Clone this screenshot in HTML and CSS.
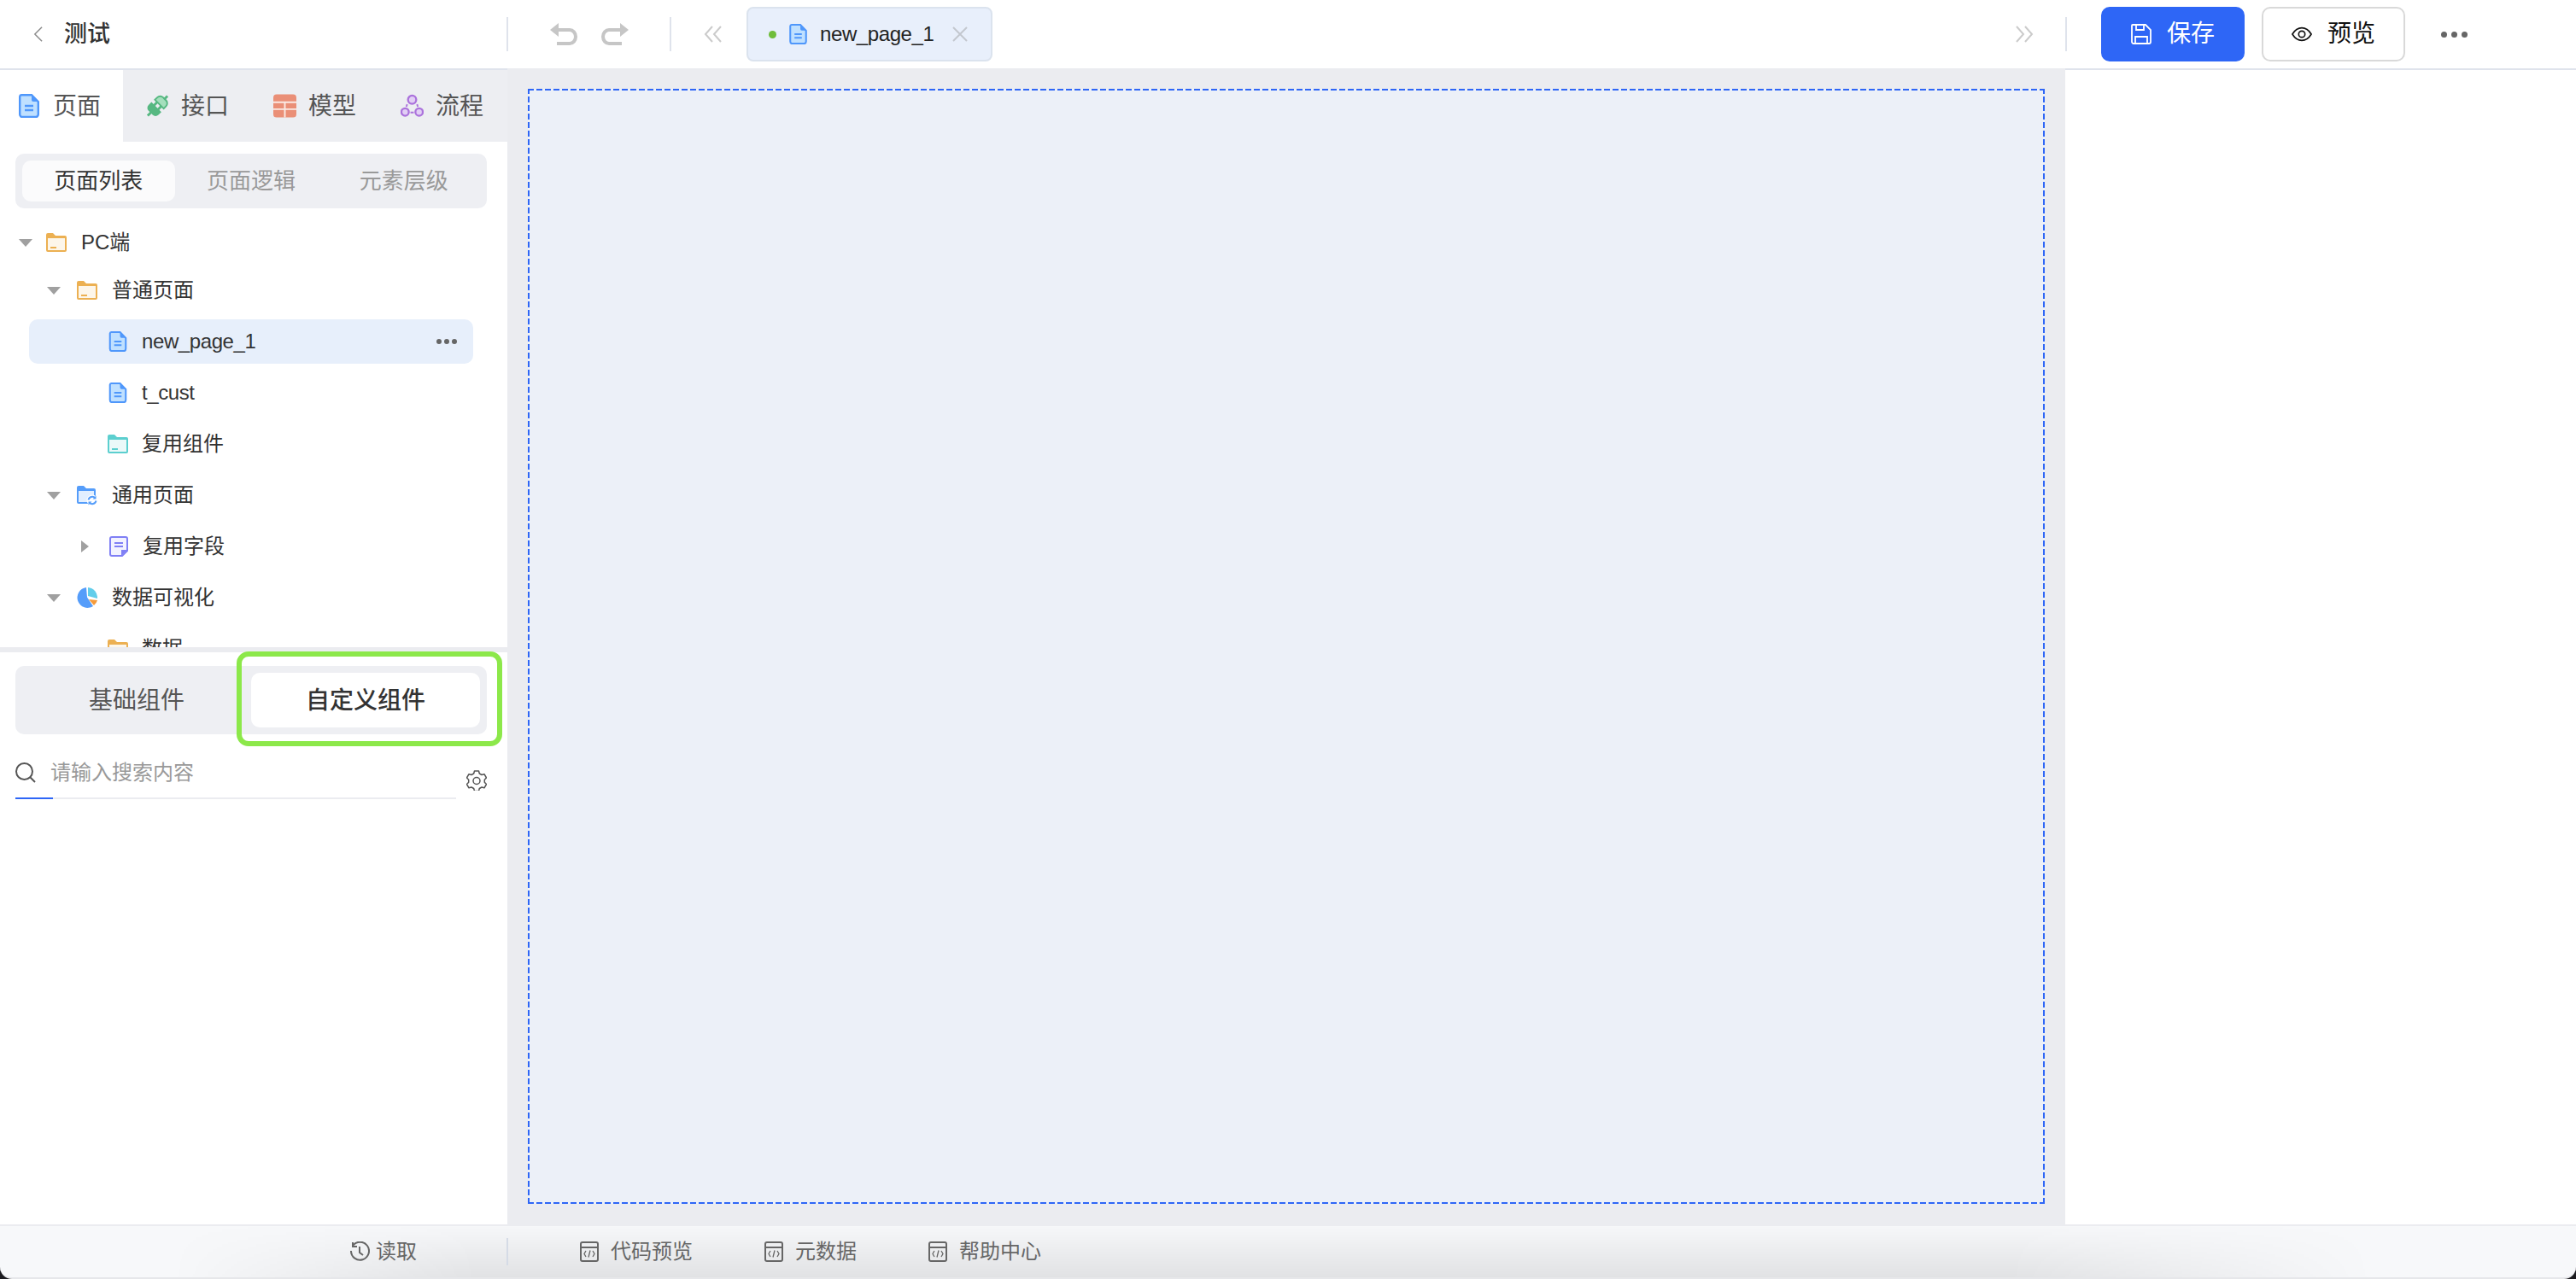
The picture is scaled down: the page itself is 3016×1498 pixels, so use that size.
FILE: index.html

```html
<!DOCTYPE html>
<html>
<head>
    <meta charset="UTF-8">
    <title>测试</title>
    <link rel="stylesheet" href="styles.css">
</head>
<body>
    <svg class="defs">
        <symbol id="i-page" viewBox="0 0 24 28">
            <path d="M3 1.200h12l7.800 8V24a3 3 0 0 1-3 3H4.200a3 3 0 0 1-3-3V3a2 2 0 0 1 1.800-1.800z" fill="#bfe0ff" stroke="#4f97fb" stroke-width="2.400"/>
            <path d="M15 1l8 8h-6a2 2 0 0 1-2-2z" fill="#4f97fb"/>
            <path d="M7 14h10M7 19h10" stroke="#4f97fb" stroke-width="2.400"/>
        </symbol>
        <symbol id="i-folder" viewBox="0 0 24 22">
            <path d="M0 2a2 2 0 0 1 2-2h6l3 3h11a2 2 0 0 1 2 2v15a2 2 0 0 1-2 2H2a2 2 0 0 1-2-2z" fill="currentColor"/>
            <rect x="2" y="6" width="20" height="14" fill="#fff" fill-opacity=".88"/>
            <rect x="5" y="16" width="7" height="2" fill="currentColor"/>
        </symbol>
        <symbol id="i-code" viewBox="0 0 24 24">
            <rect x="2" y="1" width="20" height="22" rx="2" fill="none" stroke="#666" stroke-width="2"/>
            <path d="M2 7h20" stroke="#666" stroke-width="2"/>
            <path d="M8 11l-2 3.500 2 3.500M16 11l2 3.500-2 3.500M13 10.500l-2 8" fill="none" stroke="#666" stroke-width="1.300"/>
        </symbol>
    </svg>

    <header class="topbar">
        <div class="topbar-title">
            <svg class="back" viewBox="0 0 12 20"><path d="M11 1L2 10l9 9" fill="none" stroke="#8c8c8c" stroke-width="1.600"/></svg>
            <span>测试</span>
        </div>
        <div class="topbar-history">
            <svg class="hist" viewBox="0 0 32 26"><path d="M8 8h15a7 8 0 0 1 0 16H8" fill="none" stroke="#c6c6c6" stroke-width="4"/><path d="M0 8l10-8v16z" fill="#c6c6c6"/></svg>
            <svg class="hist" viewBox="0 0 32 26"><path d="M24 8H9a7 8 0 0 0 0 16h15" fill="none" stroke="#c6c6c6" stroke-width="4"/><path d="M32 8L22 0v16z" fill="#c6c6c6"/></svg>
        </div>
        <div class="topbar-tabs">
            <svg class="scroll" viewBox="0 0 22 20"><path d="M10 1l-8 9 8 9M20 1l-8 9 8 9" fill="none" stroke="#cbcbcb" stroke-width="2"/></svg>
            <div class="open-tab">
                <i class="dot"></i>
                <svg class="ic-page"><use href="#i-page"/></svg>
                <span class="latin">new_page_1</span>
                <svg class="close" viewBox="0 0 18 18"><path d="M1 1l16 16M17 1L1 17" stroke="#c3c7ce" stroke-width="2"/></svg>
            </div>
            <svg class="scroll scroll-end" viewBox="0 0 22 20"><path d="M2 1l8 9-8 9M12 1l8 9-8 9" fill="none" stroke="#cbcbcb" stroke-width="2"/></svg>
        </div>
        <div class="topbar-actions">
            <button class="btn btn-primary">
                <svg class="btn-ic" viewBox="0 0 24 24"><path d="M2 1h15l6 6v14a2 2 0 0 1-2 2H3a2 2 0 0 1-2-2V2a1 1 0 0 1 1-1zM6 1v6h9V1M5 23v-8h14v8" fill="none" stroke="#fff" stroke-width="1.800"/></svg>
                <span>保存</span>
            </button>
            <button class="btn">
                <svg class="btn-ic" viewBox="0 0 26 18"><path d="M1 9c3-5 7-8 12-8s9 3 12 8c-3 5-7 8-12 8S4 14 1 9z" fill="none" stroke="#111" stroke-width="1.800"/><circle cx="13" cy="9" r="4" fill="none" stroke="#111" stroke-width="1.800"/></svg>
                <span>预览</span>
            </button>
            <div class="more-dots"><i></i><i></i><i></i></div>
        </div>
    </header>

    <main class="workspace">
        <aside class="sidebar">
            <nav class="side-tabs">
                <div class="side-tab active">
                    <svg class="tab-ic"><use href="#i-page"/></svg><span>页面</span>
                </div>
                <div class="side-tab">
                    <svg class="tab-ic" viewBox="0 0 28 28">
                        <g transform="rotate(-45 14 14)">
                            <path d="M12 5.500v17H7a5 5 0 0 1-5-5v-7a5 5 0 0 1 5-5z" fill="#57b882"/>
                            <path d="M17 6.500v15h4a5 5 0 0 0 5-5v-5a5 5 0 0 0-5-5z" fill="#a5dfbd" stroke="#57b882" stroke-width="2"/>
                            <path d="M11 10.500h6M11 17.500h6M-3 14h6M25 14h6" stroke="#57b882" stroke-width="3"/>
                        </g>
                    </svg><span>接口</span>
                </div>
                <div class="side-tab">
                    <svg class="tab-ic" viewBox="0 0 28 28">
                        <rect width="28" height="28" rx="4" fill="#ea8f77"/>
                        <path d="M0 9.500h28M0 18h28M14 9.500V28" stroke="#fbe9e3" stroke-width="2"/>
                    </svg><span>模型</span>
                </div>
                <div class="side-tab">
                    <svg class="tab-ic" viewBox="0 0 28 28">
                        <circle cx="14" cy="6.500" r="5" fill="#e2cff5" stroke="#ab72dc" stroke-width="2.400"/>
                        <circle cx="5.500" cy="21.500" r="4.500" fill="#e2cff5" stroke="#ab72dc" stroke-width="2.400"/>
                        <circle cx="22.500" cy="21.500" r="4.500" fill="#e2cff5" stroke="#ab72dc" stroke-width="2.400"/>
                        <path d="M8 12l-1 3M20 12l1 3M12 22h4" stroke="#ab72dc" stroke-width="2"/>
                    </svg><span>流程</span>
                </div>
            </nav>

            <div class="segment segment-small">
                <div class="segment-item active">页面列表</div>
                <div class="segment-item">页面逻辑</div>
                <div class="segment-item">元素层级</div>
            </div>

            <ul class="tree">
                <li class="tree-row lv1">
                    <i class="caret"></i>
                    <svg class="node-ic folder-orange"><use href="#i-folder"/></svg>
                    <span>PC端</span>
                </li>
                <li class="tree-row lv2">
                    <i class="caret"></i>
                    <svg class="node-ic folder-orange"><use href="#i-folder"/></svg>
                    <span>普通页面</span>
                </li>
                <li class="tree-row lv3 selected">
                    <svg class="node-ic page-ic"><use href="#i-page"/></svg>
                    <span class="latin">new_page_1</span>
                    <div class="more-dots small"><i></i><i></i><i></i></div>
                </li>
                <li class="tree-row lv3">
                    <svg class="node-ic page-ic"><use href="#i-page"/></svg>
                    <span class="latin">t_cust</span>
                </li>
                <li class="tree-row lv3">
                    <svg class="node-ic folder-teal"><use href="#i-folder"/></svg>
                    <span>复用组件</span>
                </li>
                <li class="tree-row lv2">
                    <i class="caret"></i>
                    <svg class="node-ic" viewBox="0 0 24 24">
                        <path d="M0 3a2 2 0 0 1 2-2h6l3 3h9a2 2 0 0 1 2 2v16H2a2 2 0 0 1-2-2z" fill="#559dfa"/>
                        <rect x="2" y="7" width="18" height="13" fill="#e2efff"/>
                        <circle cx="18" cy="18" r="6.500" fill="#fff"/>
                        <path d="M13.500 17.500a4.600 4.600 0 0 1 8-2M22.500 18.500a4.600 4.600 0 0 1-8 2" fill="none" stroke="#559dfa" stroke-width="2"/>
                        <path d="M22.500 12.500v4h-4zM13.500 23.500v-4h4z" fill="#559dfa"/>
                    </svg>
                    <span>通用页面</span>
                </li>
                <li class="tree-row lv3 has-caret">
                    <i class="caret closed"></i>
                    <svg class="node-ic page-ic" viewBox="0 0 22 24">
                        <path d="M3 1h16a2 2 0 0 1 2 2v14l-6 6H3a2 2 0 0 1-2-2V3a2 2 0 0 1 2-2z" fill="#f2f2ff" stroke="#7f7ff5" stroke-width="2"/>
                        <path d="M21 16l-7 7v-7z" fill="#7f7ff5"/>
                        <path d="M6 8h10M6 12h10" stroke="#7f7ff5" stroke-width="2"/>
                    </svg>
                    <span>复用字段</span>
                </li>
                <li class="tree-row lv2">
                    <i class="caret"></i>
                    <svg class="node-ic" viewBox="0 0 24 24">
                        <path d="M11 0a12 12 0 1 0 8 22l-7-10.500z" fill="#559dfa"/>
                        <path d="M13 0a12 12 0 0 1 11 13l-11-3z" fill="#62cdea"/>
                        <path d="M14 14l10 1a12 12 0 0 1-4 6z" fill="#f59b3c"/>
                    </svg>
                    <span>数据可视化</span>
                </li>
                <li class="tree-row lv3">
                    <svg class="node-ic folder-orange"><use href="#i-folder"/></svg>
                    <span>数据</span>
                </li>
            </ul>

            <div class="components">
                <div class="segment segment-large">
                    <div class="segment-item">基础组件</div>
                    <div class="segment-item active">自定义组件</div>
                </div>
                <div class="highlight"></div>
                <div class="search-row">
                    <div class="search-box">
                        <svg class="search-ic" viewBox="0 0 24 24"><circle cx="10.500" cy="10.500" r="9.500" fill="none" stroke="#555" stroke-width="2"/><path d="M17 17l6 6" stroke="#555" stroke-width="2"/></svg>
                        <span>请输入搜索内容</span>
                    </div>
                    <svg class="gear" viewBox="0 0 24 24">
                        <path d="M9.500 1h5l.8 3 2.700 1.500 3-.8 2.500 4.300-2.200 2.200v3.100l2.200 2.200-2.500 4.300-3-.8-2.700 1.500-.8 3h-5l-.8-3-2.700-1.500-3 .8L.5 16.500l2.200-2.200v-3.100L.5 9l2.500-4.300 3 .8 2.700-1.500z" fill="none" stroke="#555" stroke-width="1.500" stroke-linejoin="round"/>
                        <circle cx="12" cy="12.500" r="4" fill="none" stroke="#555" stroke-width="1.500"/>
                    </svg>
                </div>
            </div>
        </aside>

        <section class="canvas">
            <div class="canvas-page"></div>
        </section>

        <aside class="props"></aside>
    </main>

    <footer class="statusbar">
        <div class="status-left">
            <svg class="status-ic" viewBox="0 0 24 24"><path d="M4 5a10.500 10.500 0 1 1-2 6M4 1v5h5" fill="none" stroke="#666" stroke-width="2"/><path d="M12 6v7l4 3" fill="none" stroke="#666" stroke-width="2"/></svg>
            <span>读取</span>
        </div>
        <div class="status-links">
            <div class="status-link"><svg class="status-ic"><use href="#i-code"/></svg><span>代码预览</span></div>
            <div class="status-link"><svg class="status-ic"><use href="#i-code"/></svg><span>元数据</span></div>
            <div class="status-link"><svg class="status-ic"><use href="#i-code"/></svg><span>帮助中心</span></div>
        </div>
    </footer>
</body>
</html>
```

FILE: styles.css

```css
* {
    box-sizing: border-box;
}

html, body {
    height: 100%;
}

/* dark body only shows through the rounded window corners */
body {
    margin: 0;
    height: 1498px;
    display: flex;
    flex-direction: column;
    overflow: hidden;
    background: #1c1c20;
    color: #333;
    font-family: "Liberation Sans", "Noto Sans CJK SC", sans-serif;
    font-size: 24px;
    line-height: 1;
}

svg {
    display: block;
    flex: none;
}

.defs {
    width: 0;
    height: 0;
    position: absolute;
}

.latin {
    letter-spacing: -.4px;
}

/* top bar */
.topbar {
    height: 80px;
    flex: none;
    display: flex;
    align-items: center;
    background: #fff;
}

.topbar-title {
    width: 595px;
    height: 40px;
    padding-left: 39px;
    display: flex;
    align-items: center;
    gap: 25px;
    border-right: 2px solid #dfe3ec;
    font-size: 27px;
    font-weight: 500;
}

.back {
    width: 11px;
    height: 20px;
}

.topbar-history {
    width: 191px;
    height: 40px;
    padding-left: 49px;
    display: flex;
    align-items: center;
    gap: 28px;
    border-right: 2px solid #dfe3ec;
}

.hist {
    width: 32px;
    height: 26px;
}

.topbar-tabs {
    width: 1634px;
    height: 40px;
    padding: 0 37px 0 38px;
    display: flex;
    align-items: center;
    border-right: 2px solid #dfe3ec;
}

.scroll {
    width: 22px;
    height: 20px;
}

.scroll-end {
    margin-left: auto;
}

.open-tab {
    width: 288px;
    height: 64px;
    margin-left: 28px;
    padding-left: 24px;
    display: flex;
    align-items: center;
    flex: none;
    background: #e8effb;
    border: 2px solid #dbe3ee;
    border-radius: 8px;
    color: #222;
}

.dot {
    width: 9px;
    height: 9px;
    border-radius: 50%;
    background: #6fbd3a;
}

.ic-page {
    width: 21px;
    height: 24px;
    margin: 0 15px;
}

.close {
    width: 18px;
    height: 18px;
    margin-left: 22px;
}

.topbar-actions {
    padding-left: 40px;
    display: flex;
    align-items: center;
}

.btn {
    width: 168px;
    height: 64px;
    margin-right: 20px;
    padding: 0;
    display: flex;
    align-items: center;
    justify-content: center;
    gap: 18px;
    background: #fff;
    border: 2px solid #d9d9d9;
    border-radius: 10px;
    color: #111;
    font: inherit;
    font-size: 28px;
}

.btn-primary {
    background: #2e66f6;
    border-color: #2e66f6;
    color: #fff;
}

.btn-ic {
    width: 24px;
    height: 24px;
}

.more-dots {
    margin-left: 22px;
    display: flex;
    gap: 5px;
}

.more-dots i {
    width: 7px;
    height: 7px;
    border-radius: 50%;
    background: #666;
}

.more-dots.small {
    margin-left: auto;
    margin-right: 19px;
    gap: 3px;
}

.more-dots.small i {
    width: 6px;
    height: 6px;
}

/* three panes */
.workspace {
    flex: 1;
    min-height: 0;
    display: flex;
}

.sidebar {
    width: 594px;
    flex: none;
    display: flex;
    flex-direction: column;
    background: #fff;
    border-top: 2px solid #dfe3ec;
}

.side-tabs {
    height: 84px;
    flex: none;
    display: flex;
    gap: 5px;
    background: #edeef2;
}

.side-tab {
    width: 144px;
    padding-left: 22px;
    display: flex;
    align-items: center;
    gap: 14px;
    color: #555;
    font-size: 28px;
}

.side-tab span {
    padding-top: 2px;
}

.side-tab.active {
    background: #fff;
}

.tab-ic {
    width: 27px;
    height: 28px;
}

.side-tab.active .tab-ic {
    width: 24px;
    margin-right: 2px;
}

.segment {
    display: flex;
    margin: 0 24px 0 18px;
    padding: 8px;
    background: #eeeff3;
    border-radius: 10px;
    color: #999;
}

.segment-item {
    display: flex;
    align-items: center;
    justify-content: center;
    border-radius: 10px;
}

.segment-item.active {
    background: #fbfbfc;
    color: #333;
}

.segment-small {
    height: 64px;
    margin-top: 14px;
    font-size: 26px;
}

.segment-small .segment-item {
    width: 179px;
}

.segment-large {
    height: 80px;
    color: #555;
    font-size: 28px;
}

.segment-large .segment-item {
    width: 268px;
    padding-top: 2px;
}

.segment-large .segment-item.active {
    background: #fff;
    color: #333;
    font-weight: 500;
}

/* page tree */
.tree {
    height: 514px;
    flex: none;
    margin: 0;
    padding: 14px 0 0;
    list-style: none;
    overflow: hidden;
}

.tree-row {
    height: 52px;
    margin-bottom: 8px;
    display: flex;
    align-items: center;
    border-radius: 10px;
    margin-right: 40px;
}

.tree-row:first-child {
    margin-bottom: 4px;
}

.tree-row span {
    margin-left: 17px;
}

.lv1 {
    padding-left: 22px;
}

.lv2 {
    padding-left: 55px;
}

.lv2 .caret {
    margin-right: 19px;
}

.lv3 {
    margin-left: 34px;
    padding-left: 92px;
}

.lv3 span {
    margin-left: 16px;
}

.has-caret {
    padding-left: 61px;
}

.selected {
    background: #e7effb;
}

.caret {
    width: 0;
    height: 0;
    margin-right: 16px;
    border-style: solid;
    border-width: 9px 8px 0;
    border-color: #a0a0a0 transparent transparent;
}

.caret.closed {
    margin-right: 23px;
    border-width: 7px 0 7px 9px;
    border-color: transparent transparent transparent #a0a0a0;
}

.node-ic {
    width: 24px;
    height: 24px;
}

.page-ic {
    width: 22px;
    margin: 0 1px 0 1px;
}

.folder-orange {
    color: #ecb052;
}

.folder-teal {
    color: #5ccfcf;
}

/* component panel */
.components {
    flex: 1;
    position: relative;
    padding-top: 16px;
    border-top: 6px solid #ebecf0;
}

.highlight {
    position: absolute;
    left: 277px;
    top: -1px;
    width: 311px;
    height: 111px;
    border: 6px solid #8ce84a;
    border-radius: 14px;
}

.search-row {
    margin: 0 24px 0 18px;
    display: flex;
    align-items: flex-end;
    justify-content: space-between;
}

.search-box {
    width: 516px;
    height: 76px;
    padding-bottom: 17px;
    display: flex;
    align-items: flex-end;
    gap: 17px;
    border-bottom: 2px solid #ebecf0;
    color: #999;
    position: relative;
}

/* focus bar on the search underline */
.search-box::after {
    content: "";
    position: absolute;
    left: 0;
    bottom: -2px;
    width: 44px;
    height: 2px;
    background: #2e66f6;
}

.search-ic {
    width: 24px;
    height: 24px;
}

.gear {
    width: 24px;
    height: 24px;
    margin-bottom: 10px;
}

/* canvas */
.canvas {
    flex: 1;
    padding: 24px;
    background: #ebecf0;
}

/* four dashed edges, 7px dash on a 10px pitch */
.canvas-page {
    height: 100%;
    background-color: #ecf0f8;
    background-image:
        repeating-linear-gradient(90deg, #2e66f6 0 7px, transparent 7px 10px),
        repeating-linear-gradient(90deg, #2e66f6 0 7px, transparent 7px 10px),
        repeating-linear-gradient(0deg, #2e66f6 0 7px, transparent 7px 10px),
        repeating-linear-gradient(0deg, #2e66f6 0 7px, transparent 7px 10px);
    background-position: left top, left bottom, left top, right top;
    background-size: 100% 2px, 100% 2px, 2px 100%, 2px 100%;
    background-repeat: no-repeat;
}

.props {
    width: 598px;
    flex: none;
    background: #fff;
    border-top: 2px solid #dfe3ec;
}

/* bottom bar */
.statusbar {
    height: 64px;
    flex: none;
    display: flex;
    align-items: center;
    position: relative;
    overflow: hidden;
    border-top: 2px solid #ebecf0;
    border-bottom: 2px solid #e6e7ea;
    border-radius: 0 0 14px 14px;
    background: #f7f8fa;
    color: #666;
}

/* soft shade rising from the lower edge, faded out toward both ends */
.statusbar::before {
    content: "";
    position: absolute;
    inset: 0;
    background: linear-gradient(to top, rgba(0, 0, 0, .085), rgba(0, 0, 0, .005));
    -webkit-mask-image: linear-gradient(to right, transparent 200px, #000 560px, #000 2350px, transparent 2780px);
    mask-image: linear-gradient(to right, transparent 200px, #000 560px, #000 2350px, transparent 2780px);
}

.status-left {
    width: 595px;
    height: 32px;
    padding-left: 409px;
    display: flex;
    align-items: center;
    gap: 7px;
    border-right: 2px solid #d5dbe6;
    position: relative;
}

.status-links {
    padding-left: 83px;
    display: flex;
    align-items: center;
    gap: 83px;
    position: relative;
}

.status-link {
    display: flex;
    align-items: center;
    gap: 13px;
}

.status-ic {
    width: 24px;
    height: 24px;
}
```
